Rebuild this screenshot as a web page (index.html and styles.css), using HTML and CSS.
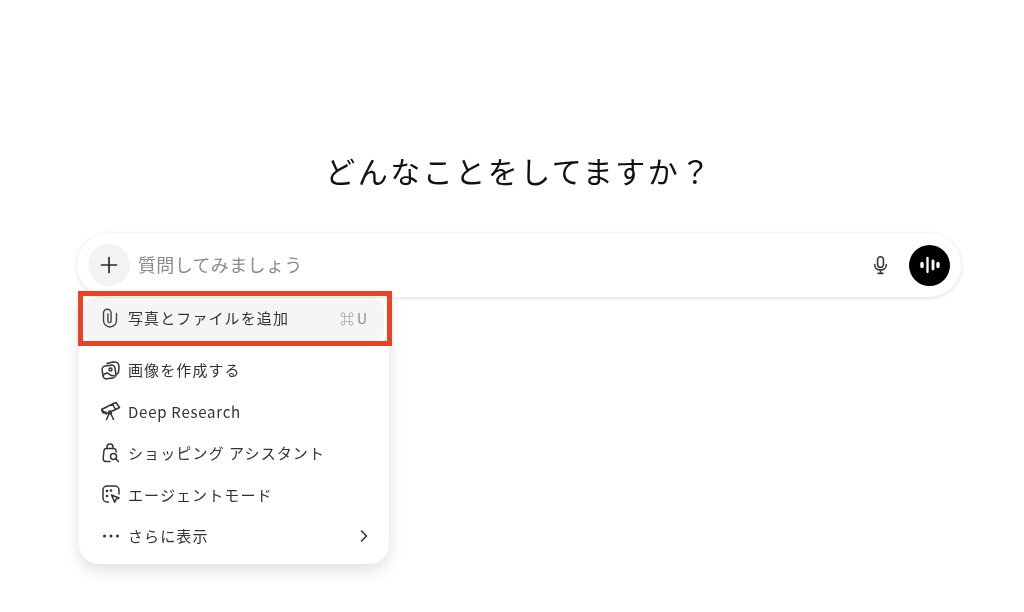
FILE: index.html
```html
<!DOCTYPE html>
<html lang="ja">
<head>
    <meta charset="UTF-8">
    <title>ChatGPT</title>
    <link rel="stylesheet" href="styles.css">
</head>
<body>
    <div class="page">
        <h1 class="title">どんなことをしてますか？</h1>
        <div class="composer">
            <button class="plus">
                <svg width="20" height="20" viewBox="0 0 20 20"><path d="M10 2.500v15M2.500 10h15" stroke="#2b2b2b" stroke-width="1.700" stroke-linecap="round"/></svg>
            </button>
            <span class="placeholder">質問してみましょう</span>
            <svg class="mic" width="17" height="20" viewBox="0 0 20 24" fill="none" stroke="#3a3a3a" stroke-width="1.900" stroke-linecap="round"><rect x="6.500" y="2" width="7" height="13" rx="3.500"/><path d="M3 11.500c0 4 3 6.500 7 6.500s7-2.500 7-6.500M10 18v4M7 22h6"/></svg>
            <span class="voice">
                <svg width="22" height="22" viewBox="0 0 22 22" fill="none" stroke="#fff" stroke-linecap="round"><path d="M3 9.500v3M19 9.500v3" stroke-width="3.400"/><path d="M8.500 4v14" stroke-width="2.300"/><path d="M14 7v8" stroke-width="2.800"/></svg>
            </span>
        </div>
        <div class="menu">
            <div class="item item-active">
                <svg class="icon" viewBox="0 0 20 20" fill="none" stroke="#444" stroke-width="1.400" stroke-linecap="round"><path d="M15.500 5.500v7a6.500 6.500 0 0 1-13 0V5a3.800 3.800 0 0 1 7.600 0v8a1.600 1.600 0 0 1-3.200 0V6"/></svg>
                <span class="label">写真とファイルを追加</span>
                <span class="shortcut">⌘U</span>
            </div>
            <div class="item item-first">
                <svg class="icon" viewBox="0 0 20 20" fill="none" stroke="#333" stroke-width="1.500" stroke-linecap="round" stroke-linejoin="round"><rect x="1.500" y="5.500" width="13" height="13" rx="3.500" transform="rotate(-8 8 12)"/><path d="M6 3.500l6-1.500c3.500-.5 6 1 6 4.500l-.500 6-2 2"/><circle cx="9.500" cy="9.500" r="1.500"/><path d="M2.500 15c2-2 4-2.500 5.500-1s3 2 5 1.500"/></svg>
                <span class="label">画像を作成する</span>
            </div>
            <div class="item">
                <svg class="icon" viewBox="0 0 20 20" fill="none" stroke="#333" stroke-width="1.500" stroke-linecap="round" stroke-linejoin="round"><path d="M.500 8.500l11-5.500 3 5.500-9.500 4.500zM11.500 3l3.500-1.500 3.500 5-4 2"/><path d="M.500 8.500l1.500 3.500 3-1"/><circle cx="9" cy="11.500" r="1.500"/><path d="M8 13l-2.500 5.500M10 13l2.500 5.500"/></svg>
                <span class="label label-latin">Deep Research</span>
            </div>
            <div class="item">
                <svg class="icon" viewBox="0 0 20 20" fill="none" stroke="#333" stroke-width="1.500" stroke-linecap="round" stroke-linejoin="round"><path d="M9 18.500H5c-2 0-3-1.500-2.800-3.500l.8-7.500c.2-1.500 1-2 2.500-2h7c1.500 0 2.300.5 2.500 2l.2 1.500"/><path d="M6 5.500V4a3 3 0 0 1 6 0v1.500"/><circle cx="12.500" cy="13.500" r="3"/><path d="M14.800 15.800l2.700 2.700"/></svg>
                <span class="label">ショッピング アシスタント</span>
            </div>
            <div class="item">
                <svg class="icon" viewBox="0 0 20 20" fill="none" stroke="#333" stroke-width="1.500" stroke-linecap="round" stroke-linejoin="round"><path d="M7.500 18H6a4 4 0 0 1-4-4V6a4 4 0 0 1 4-4h8a4 4 0 0 1 4 4v4"/><path d="M10.500 11l7.500 3-3 1.300-1.300 3z"/><circle cx="6" cy="7" r=".6"/><circle cx="6" cy="12" r=".6"/><circle cx="10" cy="6.500" r=".6"/></svg>
                <span class="label">エージェントモード</span>
            </div>
            <div class="item">
                <svg class="icon" viewBox="0 0 20 20" fill="#333"><circle cx="3.500" cy="10" r="1.500"/><circle cx="10" cy="10" r="1.500"/><circle cx="16.500" cy="10" r="1.500"/></svg>
                <span class="label">さらに表示</span>
                <svg class="chevron" width="12" height="14" viewBox="0 0 12 14" fill="none" stroke="#333" stroke-width="1.600" stroke-linecap="round" stroke-linejoin="round"><path d="M3.500 2l5 5-5 5"/></svg>
            </div>
            <div class="highlight"></div>
        </div>
    </div>
</body>
</html>
```

FILE: styles.css
```css
body {
    margin: 0;
    background: #fff;
    font-family: "Noto Sans CJK JP", "Noto Sans", sans-serif;
    color: #2f2f2f;
}
.page {
    height: 612px;
    overflow: hidden;
    padding: 148px 63px 0 77px;
    box-sizing: border-box;
    filter: blur(0.4px);
}
.title {
    margin: 0 0 41px;
    height: 44px;
    line-height: 44px;
    font-size: 30px;
    font-weight: 400;
    letter-spacing: 2.500px;
    text-align: center;
    color: #111;
}
.composer {
    height: 64px;
    display: flex;
    align-items: center;
    padding: 0 11px;
    border-radius: 32px;
    box-shadow: 0 1px 4px rgba(0,0,0,0.14);
    background: #fff;
}
.plus {
    width: 42px;
    height: 42px;
    padding: 0;
    border: none;
    border-radius: 50%;
    background: #f3f3f3;
    display: flex;
    align-items: center;
    justify-content: center;
}
.placeholder {
    flex: 1;
    margin-left: 8px;
    padding-bottom: 2px;
    font-size: 18px;
    letter-spacing: 0.350px;
    color: #8a8a8a;
}
.mic {
    margin-right: 20px;
}
.voice {
    width: 41px;
    height: 41px;
    border-radius: 50%;
    background: #000;
    display: flex;
    align-items: center;
    justify-content: center;
}
.menu {
    position: relative;
    width: 310px;
    margin: 3px 0 0 2px;
    padding: 0 5px 7px;
    box-sizing: border-box;
    border-radius: 0 0 20px 20px;
    background: #fff;
    box-shadow: 0 6px 16px rgba(0,0,0,0.13);
}
.item {
    height: 41.500px;
    display: flex;
    align-items: center;
    padding: 0 14px 0 17px;
    font-size: 15px;
    letter-spacing: 1.100px;
    color: #333;
}
.item-active {
    height: 43px;
    margin-top: -2px;
    padding-bottom: 4px;
    box-sizing: border-box;
    border-radius: 10px;
    background: #f5f5f5;
}
.item-first {
    margin-top: 8px;
}
.icon {
    width: 20px;
    height: 20px;
    margin-right: 7px;
    flex: none;
}
.label {
    flex: 1;
    white-space: nowrap;
}
.label-latin {
    letter-spacing: 0.750px;
}
.shortcut {
    color: #8a8a8a;
    font-size: 14px;
    letter-spacing: 3px;
}
.highlight {
    position: absolute;
    left: -1px;
    top: -7px;
    width: 314px;
    height: 55px;
    box-sizing: border-box;
    border: 5px solid #ea4324;
}
```
